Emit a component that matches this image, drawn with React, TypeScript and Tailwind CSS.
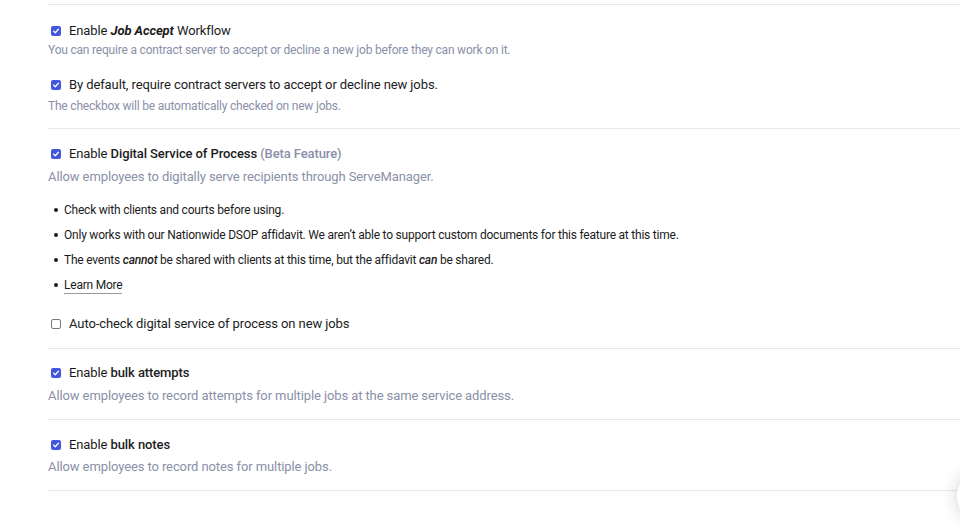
import { ReactNode } from "react"

function Check({ checked }: { checked: boolean }) {
  if (!checked) {
    return <span className="inline-block w-[10px] h-[10px] rounded-[2px] border border-[#7a7a7a] bg-white shrink-0" />
  }
  return (
    <span className="inline-flex items-center justify-center w-[10px] h-[10px] rounded-[2px] bg-[#4257dc] shrink-0">
      <svg width="8" height="8" viewBox="0 0 8 8" fill="none">
        <path d="M1.6 4.1 L3.3 5.7 L6.4 2.3" stroke="white" strokeWidth="1.3" strokeLinecap="round" strokeLinejoin="round" />
      </svg>
    </span>
  )
}

function Row({ checked, children }: { checked: boolean, children: ReactNode }) {
  return (
    <div className="flex items-center gap-[8px] pl-[3px] h-[20px] text-[13px] tracking-[-0.1px] text-[#1c1c1c]">
      <Check checked={checked} />
      <span>{children}</span>
    </div>
  )
}

function Bullet({ children }: { children: ReactNode }) {
  return (
    <li className="flex items-center h-[25px] pl-[6px] text-[12px] text-[#1c1c1c] tracking-[-0.22px]">
      <span className="w-[4px] h-[4px] rounded-full bg-[#1c1c1c] mr-[6px]" />
      <span>{children}</span>
    </li>
  )
}

export default function App() {
  return (
    <div className="relative w-[960px] h-[532px] overflow-hidden bg-white font-['Roboto',sans-serif]">
      <div className="pl-[48px] pt-[4px]">
        <section className="border-t border-[#e9e9e9] pt-[16px] pb-[13px]">
          <Row checked>Enable <b className="italic font-bold">Job Accept</b> Workflow</Row>
          <p className="text-[12px] leading-[18px] tracking-[-0.2px] text-[#8a90a8]">You can require a contract server to accept or decline a new job before they can work on it.</p>
          <div className="mt-[16px]">
            <Row checked>By default, require contract servers to accept or decline new jobs.</Row>
          </div>
          <p className="text-[12px] leading-[18px] tracking-[-0.2px] mt-[2px] text-[#8a90a8]">The checkbox will be automatically checked on new jobs.</p>
        </section>

        <section className="border-t border-[#e9e9e9] pt-[15px] pb-[14px]">
          <Row checked>Enable <span className="font-medium">Digital Service of Process</span> <span className="font-medium text-[#8a90a8]">(Beta Feature)</span></Row>
          <p className="text-[13px] leading-[20px] tracking-[-0.1px] mt-[3px] text-[#8a90a8]">Allow employees to digitally serve recipients through ServeManager.</p>
          <ul className="mt-[10px]">
            <Bullet>Check with clients and courts before using.</Bullet>
            <Bullet>Only works with our Nationwide DSOP affidavit. We aren’t able to support custom documents for this feature at this time.</Bullet>
            <Bullet>The events <b className="italic font-medium">cannot</b> be shared with clients at this time, but the affidavit <b className="italic font-medium">can</b> be shared.</Bullet>
            <Bullet><a className="border-b border-[#9a9a9a] pb-[1px]">Learn More</a></Bullet>
          </ul>
          <div className="mt-[17px]">
            <Row checked={false}>Auto-check digital service of process on new jobs</Row>
          </div>
        </section>

        <section className="border-t border-[#e9e9e9] pt-[14px] pb-[13px]">
          <Row checked>Enable <span className="font-medium">bulk attempts</span></Row>
          <p className="text-[13px] leading-[20px] tracking-[-0.1px] mt-[3px] text-[#8a90a8]">Allow employees to record attempts for multiple jobs at the same service address.</p>
        </section>

        <section className="border-t border-[#e9e9e9] border-b pt-[15px] pb-[13px]">
          <Row checked>Enable <span className="font-medium">bulk notes</span></Row>
          <p className="text-[13px] leading-[20px] tracking-[-0.1px] mt-[2px] text-[#8a90a8]">Allow employees to record notes for multiple jobs.</p>
        </section>
      </div>

      <div className="absolute left-[957px] top-[468px] w-[56px] h-[56px] rounded-full bg-white shadow-[0_0_18px_rgba(0,0,0,0.18)]" />
    </div>
  )
}
